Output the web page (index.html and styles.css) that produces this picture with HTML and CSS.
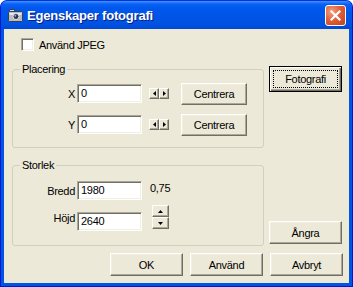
FILE: index.html
```html
<!DOCTYPE html>
<html lang="sv">
<head>
    <meta charset="UTF-8">
    <title>Egenskaper fotografi</title>
    <link rel="stylesheet" href="styles.css">
</head>
<body>

    <div class="window">
        <div class="titlebar">
            <span class="title-icon">
                <svg width="15" height="13" viewBox="0 0 15 13">
                    <rect x="0.5" y="2.5" width="14" height="10" rx="1" fill="#b8bcc4" stroke="#3a3f4a"/>
                    <rect x="2" y="0.5" width="4" height="2" fill="#d8dbe0" stroke="#3a3f4a"/>
                    <rect x="1.5" y="4" width="12" height="2" fill="#e6e8ec"/>
                    <circle cx="8" cy="7.5" r="3" fill="#2a3550" stroke="#e8eaee"/>
                    <circle cx="7.3" cy="6.8" r="0.9" fill="#9fb4e0"/>
                </svg>
            </span>
            <span class="title-text">Egenskaper fotografi</span>
            <span class="close-btn">
                <svg width="11" height="11" viewBox="0 0 11 11">
                    <path d="M1.5 1.5 L9.5 9.5 M9.5 1.5 L1.5 9.5" stroke="#fff" stroke-width="2.2" stroke-linecap="square"/>
                </svg>
            </span>
        </div>

        <div class="client">
            <div class="main">
                <div class="left-col">
                    <div class="check-row">
                        <span class="checkbox"></span>
                        <span>Använd JPEG</span>
                    </div>

                    <fieldset class="group group-place">
                        <legend>Placering</legend>
                        <div class="field-row">
                            <span class="field-label">X</span>
                            <span class="textbox">0</span>
                            <span class="hspin">
                                <span class="spin-btn"><svg width="3" height="5" viewBox="0 0 3 5"><path d="M3 0 L0 2.5 L3 5 Z" fill="#000"/></svg></span>
                                <span class="spin-btn"><svg width="3" height="5" viewBox="0 0 3 5"><path d="M0 0 L3 2.5 L0 5 Z" fill="#000"/></svg></span>
                            </span>
                            <span class="btn btn-center">Centrera</span>
                        </div>
                        <div class="field-row second">
                            <span class="field-label">Y</span>
                            <span class="textbox">0</span>
                            <span class="hspin">
                                <span class="spin-btn"><svg width="3" height="5" viewBox="0 0 3 5"><path d="M3 0 L0 2.5 L3 5 Z" fill="#000"/></svg></span>
                                <span class="spin-btn"><svg width="3" height="5" viewBox="0 0 3 5"><path d="M0 0 L3 2.5 L0 5 Z" fill="#000"/></svg></span>
                            </span>
                            <span class="btn btn-center">Centrera</span>
                        </div>
                    </fieldset>

                    <fieldset class="group group-size">
                        <legend>Storlek</legend>
                        <div class="size-row">
                            <span class="field-label">Bredd</span>
                            <span class="textbox">1980</span>
                            <span class="ratio">0,75</span>
                        </div>
                        <div class="size-row second">
                            <span class="field-label">Höjd</span>
                            <span class="textbox">2640</span>
                            <span class="vspin">
                                <span class="spin-btn"><svg width="5" height="3" viewBox="0 0 5 3"><path d="M0 3 L2.5 0 L5 3 Z" fill="#000"/></svg></span>
                                <span class="spin-btn"><svg width="5" height="3" viewBox="0 0 5 3"><path d="M0 0 L2.5 3 L5 0 Z" fill="#000"/></svg></span>
                            </span>
                        </div>
                    </fieldset>
                </div>

                <div class="right-col">
                    <span class="btn btn-default">Fotografi</span>
                    <span class="btn btn-undo">Ångra</span>
                </div>
            </div>

            <div class="button-row">
                <span class="btn">OK</span>
                <span class="btn">Använd</span>
                <span class="btn">Avbryt</span>
            </div>
        </div>
    </div>

</body>
</html>
```

FILE: styles.css
```css
body {
    margin: 0;
    background-color: #fff;
    font-family: "Liberation Sans", Arial, sans-serif;
    font-size: 11px;
    letter-spacing: -0.3px;
    color: #000;
}

.window {
    width: 353px;
    height: 287px;
    box-sizing: border-box;
    display: flex;
    flex-direction: column;
    border-radius: 7px 7px 0 0;
    border: 1px solid #0019cf;
    border-top-color: #0831d9;
    background-color: #0055e5;
    overflow: hidden;
}

/* XP Luna title bar */
.titlebar {
    height: 28px;
    flex-shrink: 0;
    display: flex;
    align-items: center;
    padding: 0 5px 0 7px;
    background: linear-gradient(to bottom, #3d95ff 0, #0a62f4 3px, #0058ee 7px, #0055e8 50%, #0052e2 80%, #0049d6 100%);
}

.title-icon {
    width: 15px;
    height: 13px;
    display: flex;
    margin-right: 4px;
}

.title-text {
    flex: 1;
    color: #fff;
    font-weight: bold;
    font-size: 13px;
    text-shadow: 1px 1px 0 #0a1e80;
    letter-spacing: -0.2px;
}

.close-btn {
    width: 19px;
    height: 19px;
    margin-right: 1px;
    display: flex;
    justify-content: center;
    align-items: center;
    border: 1px solid #fff;
    border-radius: 3px;
    background: radial-gradient(circle at 30% 30%, #f0a080 0, #e2603c 45%, #c43e1a 100%);
}

.client {
    flex: 1;
    margin: 0 3px 3px 3px;
    padding: 9px 6px 7px 8px;
    background-color: #ece9d8;
    display: flex;
    flex-direction: column;
}

.main {
    display: flex;
    gap: 5px;
}

.left-col {
    width: 252px;
    display: flex;
    flex-direction: column;
}

.check-row {
    height: 13px;
    display: flex;
    align-items: center;
    padding-left: 9px;
}

.checkbox {
    width: 11px;
    height: 11px;
    margin-right: 5px;
    background-color: #fff;
    border: 1px solid;
    border-color: #aca899 #fff #fff #aca899;
    box-shadow: inset 1px 1px 0 #716f64, inset -1px -1px 0 #f1efe2;
}

/* group boxes */
.group {
    margin: 0;
    min-width: 0;
    padding: 0;
    border: 1px solid #d0d0bf;
    border-radius: 3px;
}

.group legend {
    margin-left: 7px;
    padding: 0 2px;
    line-height: 14px;
}

.group-place {
    margin-top: 11px;
    padding: 7px 0 12px 0;
}

.group-size {
    margin-top: 10px;
    padding: 9px 0 14px 0;
}

.field-row {
    height: 21px;
    display: flex;
    align-items: center;
}

.field-row.second {
    margin-top: 10px;
}

.field-label {
    width: 62px;
    margin-right: 2px;
    text-align: right;
}

.textbox {
    width: 60px;
    height: 15px;
    padding: 1px 0 1px 3px;
    line-height: 15px;
    background-color: #fff;
    border: 1px solid;
    border-color: #aca899 #fff #fff #aca899;
    box-shadow: inset 1px 1px 0 #716f64, inset -1px -1px 0 #f1efe2;
}

.hspin {
    display: flex;
    margin-left: 7px;
}

.vspin {
    display: flex;
    flex-direction: column;
    margin-left: 10px;
    align-self: flex-start;
}

.spin-btn {
    display: flex;
    justify-content: center;
    align-items: center;
    box-sizing: border-box;
    background-color: #ece9d8;
    border: 1px solid;
    border-color: #fff #716f64 #716f64 #fff;
    box-shadow: inset -1px -1px 0 #aca899;
}

.hspin .spin-btn {
    width: 10px;
    height: 11px;
}

.vspin .spin-btn {
    width: 17px;
    height: 12px;
}

.btn {
    width: 73px;
    height: 23px;
    box-sizing: border-box;
    display: flex;
    justify-content: center;
    align-items: center;
    background-color: #ece9d8;
    border: 1px solid;
    border-color: #fff #716f64 #716f64 #fff;
    box-shadow: inset -1px -1px 0 #aca899, inset 1px 1px 0 #f1efe2;
}

.btn-center {
    width: 66px;
    height: 22px;
    margin-left: 12px;
}

.size-row {
    height: 19px;
    display: flex;
    align-items: center;
}

.size-row.second {
    height: 26px;
    margin-top: 5px;
}

.size-row.second .textbox {
    align-self: flex-end;
}

.ratio {
    align-self: flex-start;
    margin-left: 8px;
    line-height: 15px;
}

.right-col {
    display: flex;
    flex-direction: column;
}

.btn-default {
    margin-top: 28px;
    height: 26px;
    border-color: #000;
    box-shadow: inset 1px 1px 0 #fff, inset -1px -1px 0 #716f64, inset -2px -2px 0 #aca899;
    outline: 1px dotted #000;
    outline-offset: -5px;
}

.btn-undo {
    margin-top: auto;
    margin-bottom: 2px;
}

.button-row {
    display: flex;
    justify-content: flex-end;
    gap: 7px;
    margin-top: 7px;
}
```
